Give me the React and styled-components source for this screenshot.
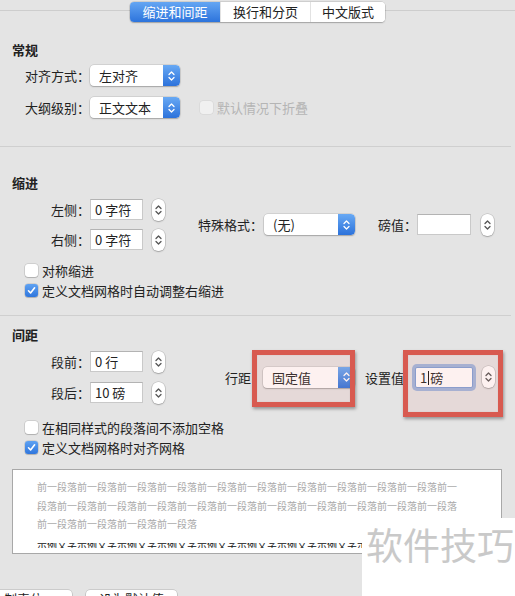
import React from "react";
import styled, { createGlobalStyle } from "styled-components";

const GlobalStyle = createGlobalStyle`
  html, body { margin: 0; padding: 0; background: #e4e4e4; }
  body { font-family: "Noto Sans CJK SC", "Noto Sans", sans-serif; color: #222; }
  * { box-sizing: border-box; }
`;

const Page = styled.div`
  position: relative;
  width: 515px;
  height: 596px;
  overflow: hidden;
  background: #e4e4e4;
  display: flex;
  flex-direction: column;
  & > * {
    flex-shrink: 0;
  }
`;

const TabBar = styled.div`
  position: relative;
  height: 24px;
  padding-top: 2px;
  display: flex;
  justify-content: center;
  &::before {
    content: "";
    position: absolute;
    left: 0;
    right: 0;
    top: 10px;
    height: 1px;
    background: #cdcdcd;
  }
`;

const TabGroup = styled.div`
  position: relative;
  display: flex;
  height: 20px;
  border-radius: 4px;
  background: #fff;
  overflow: hidden;
  box-shadow: 0 0 0 0.5px rgba(0, 0, 0, 0.18), 0 1px 1.5px rgba(0, 0, 0, 0.22);
`;

const Tab = styled.div`
  width: ${(p) => p.$w}px;
  font-size: 13px;
  line-height: 20px;
  text-align: center;
  color: ${(p) => (p.$active ? "#fff" : "#222")};
  background: ${(p) =>
    p.$active ? "linear-gradient(#64a6f3, #2d74dc)" : "#fff"};
  & + & {
    border-left: 1px solid #e2e2e2;
  }
`;

const Section = styled.div`
  display: flex;
  flex-direction: column;
  padding-left: 12px;
`;

const SectionTitle = styled.div`
  margin-top: ${(p) => p.$mt}px;
  font-size: 13px;
  font-weight: bold;
  line-height: 18px;
  color: #222;
`;

const Divider = styled.div`
  margin-top: ${(p) => p.$mt}px;
  margin-right: 4px;
  height: 1px;
  background: #cfcfcf;
`;

const FormRow = styled.div`
  display: flex;
  align-items: center;
  height: 21px;
  margin-top: ${(p) => p.$mt || 0}px;
`;

const FieldBlock = styled.div`
  display: flex;
  align-items: center;
  margin-top: ${(p) => p.$mt}px;
`;

const StackCol = styled.div`
  display: flex;
  flex-direction: column;
  gap: ${(p) => p.$gap}px;
`;

const Label = styled.div`
  width: ${(p) => p.$w}px;
  margin-left: ${(p) => p.$ml || 0}px;
  text-align: ${(p) => (p.$right ? "right" : "left")};
  font-size: 13px;
  line-height: 21px;
  white-space: nowrap;
  color: #222;
`;

const SelectBox = styled.div`
  display: flex;
  width: ${(p) => p.$w}px;
  height: 21px;
  background: #fff;
  border-radius: 4px;
  box-shadow: 0 0 0 0.5px rgba(0, 0, 0, 0.16), 0 1px 1.5px rgba(0, 0, 0, 0.22);
  overflow: hidden;
`;

const SelectText = styled.div`
  flex: 1;
  padding-left: 9px;
  font-size: 13px;
  line-height: 21px;
  color: #222;
  white-space: nowrap;
`;

const SelectArrow = styled.div`
  width: 17px;
  display: flex;
  align-items: center;
  justify-content: center;
  background: linear-gradient(#68a9f4, #2c72db);
  border-radius: 0 4px 4px 0;
`;

const TextInput = styled.div`
  width: ${(p) => p.$w}px;
  height: 21px;
  padding-left: 4px;
  background: #fff;
  border: 1px solid ${(p) => (p.$focus ? "#7c9fd6" : "#c9c9c9")};
  border-top-color: ${(p) => (p.$focus ? "#7c9fd6" : "#b3b3b3")};
  box-shadow: ${(p) =>
    p.$focus ? "0 0 0 3px rgba(110, 150, 215, 0.6)" : "none"};
  border-radius: ${(p) => (p.$focus ? 2 : 0)}px;
  font-size: 13px;
  line-height: 19px;
  color: #222;
  white-space: nowrap;
`;

const Caret = styled.span`
  display: inline-block;
  width: 1px;
  height: 14px;
  margin: 0 1px;
  vertical-align: -2px;
  background: #111;
`;

const StepperBox = styled.div`
  width: 13px;
  height: 22px;
  margin-left: ${(p) => p.$ml}px;
  border-radius: 6px;
  background: #fff;
  box-shadow: 0 0 0 0.5px rgba(0, 0, 0, 0.2), 0 1px 1.5px rgba(0, 0, 0, 0.2);
  display: flex;
  align-items: center;
  justify-content: center;
`;

const CheckRow = styled.div`
  display: flex;
  align-items: center;
  height: ${(p) => p.$h || 20}px;
  margin-top: ${(p) => p.$mt || 0}px;
  margin-left: ${(p) => p.$ml ?? 13}px;
  font-size: 13px;
  color: ${(p) => (p.$disabled ? "#b5b5b5" : "#222")};
  white-space: nowrap;
`;

const CheckBox = styled.div`
  width: 13px;
  height: 13px;
  margin-right: 4px;
  border-radius: 3px;
  display: flex;
  align-items: center;
  justify-content: center;
  background: ${(p) =>
    p.$checked ? "linear-gradient(#5fa2f2, #2f76dd)" : p.$disabled ? "#f0f0f0" : "#fff"};
  box-shadow: ${(p) =>
    p.$disabled
      ? "0 0 0 0.5px rgba(0,0,0,0.08)"
      : "0 0 0 0.5px rgba(0,0,0,0.18), 0 1px 1px rgba(0,0,0,0.15)"};
`;

const Preview = styled.div`
  margin: 12px 0 0 12px;
  width: 490px;
  height: 85px;
  background: #fff;
  border: 1px solid #a8a8a8;
  padding: 8px 0 0 24px;
  overflow: hidden;
`;

const PreviewLine = styled.div`
  font-size: 10px;
  line-height: 18.5px;
  color: #a9a9a9;
  white-space: nowrap;
`;

const SampleStrip = styled.div`
  margin-top: 9px;
  height: 5px;
  overflow: hidden;
`;

const SampleText = styled.div`
  margin-top: -3px;
  font-size: 10px;
  line-height: 10px;
  color: #111;
  white-space: nowrap;
`;

const ButtonBar = styled.div`
  display: flex;
  margin-top: 36px;
  margin-left: -14px;
  gap: 14px;
`;

const Button = styled.div`
  width: ${(p) => p.$w}px;
  height: 22px;
  background: #fff;
  border-radius: 4px;
  box-shadow: 0 0 0 0.5px rgba(0, 0, 0, 0.22), 0 1px 1px rgba(0, 0, 0, 0.2);
  font-size: 13px;
  line-height: 17px;
  text-align: center;
  color: #222;
`;

const Highlight = styled.div`
  position: absolute;
  left: ${(p) => p.$x}px;
  top: ${(p) => p.$y}px;
  width: ${(p) => p.$w}px;
  height: ${(p) => p.$h}px;
  border: 5px solid #d85a50;
  background: rgba(240, 150, 140, 0.13);
  box-shadow: 1px 2px 3px rgba(0, 0, 0, 0.35), inset 0 0 1px rgba(0, 0, 0, 0.2);
  pointer-events: none;
`;

const Watermark = styled.div`
  position: absolute;
  left: 362px;
  top: 518px;
  right: 0;
  bottom: 0;
  background: #fff;
  padding: 6px 0 0 4px;
  font-size: 37px;
  line-height: 40px;
  color: #c9c9c9;
  white-space: nowrap;
`;

const Chevrons = ({ color }) => (
  <svg width="7" height="12" viewBox="0 0 7 12">
    <path d="M1 4.5 L3.5 2 L6 4.5" fill="none" stroke={color} strokeWidth="1.3" strokeLinecap="round" strokeLinejoin="round" />
    <path d="M1 7.5 L3.5 10 L6 7.5" fill="none" stroke={color} strokeWidth="1.3" strokeLinecap="round" strokeLinejoin="round" />
  </svg>
);

const Select = ({ w, children }) => (
  <SelectBox $w={w}>
    <SelectText>{children}</SelectText>
    <SelectArrow>
      <Chevrons color="#fff" />
    </SelectArrow>
  </SelectBox>
);

const Stepper = ({ ml }) => (
  <StepperBox $ml={ml}>
    <Chevrons color="#555" />
  </StepperBox>
);

const Check = ({ checked, disabled, children, mt, ml }) => (
  <CheckRow $mt={mt} $ml={ml} $disabled={disabled}>
    <CheckBox $checked={checked} $disabled={disabled}>
      {checked && (
        <svg width="9" height="9" viewBox="0 0 9 9">
          <path d="M1.5 4.8 L3.6 7 L7.6 1.8" fill="none" stroke="#fff" strokeWidth="1.6" strokeLinecap="round" strokeLinejoin="round" />
        </svg>
      )}
    </CheckBox>
    {children}
  </CheckRow>
);

const rep = (s, n) => Array(n).fill(s).join("");

export default function App() {
  return (
    <>
      <GlobalStyle />
      <Page>
        <TabBar>
          <TabGroup>
            <Tab $w={90} $active>缩进和间距</Tab>
            <Tab $w={90}>换行和分页</Tab>
            <Tab $w={75}>中文版式</Tab>
          </TabGroup>
        </TabBar>

        <Section>
          <SectionTitle $mt={17}>常规</SectionTitle>
          <FormRow $mt={6}>
            <Label $w={78} $right>对齐方式：</Label>
            <Select w={90}>左对齐</Select>
          </FormRow>
          <FormRow $mt={11}>
            <Label $w={78} $right>大纲级别：</Label>
            <Select w={90}>正文文本</Select>
            <Check disabled ml={20}>默认情况下折叠</Check>
          </FormRow>
        </Section>

        <Divider $mt={28} />

        <Section>
          <SectionTitle $mt={27}>缩进</SectionTitle>
          <FieldBlock $mt={7}>
            <StackCol $gap={9}>
              <FormRow>
                <Label $w={78} $right>左侧：</Label>
                <TextInput $w={53}>0 字符</TextInput>
                <Stepper ml={9} />
              </FormRow>
              <FormRow>
                <Label $w={78} $right>右侧：</Label>
                <TextInput $w={53}>0 字符</TextInput>
                <Stepper ml={9} />
              </FormRow>
            </StackCol>
            <Label $w={66} $ml={33}>特殊格式：</Label>
            <Select w={91}>(无)</Select>
            <Label $w={39} $ml={23}>磅值：</Label>
            <TextInput $w={54} />
            <Stepper ml={10} />
          </FieldBlock>
          <Check mt={10}>对称缩进</Check>
          <Check checked>定义文档网格时自动调整右缩进</Check>
        </Section>

        <Divider $mt={15} />

        <Section>
          <SectionTitle $mt={10}>间距</SectionTitle>
          <FieldBlock $mt={7}>
            <StackCol $gap={10}>
              <FormRow>
                <Label $w={78} $right>段前：</Label>
                <TextInput $w={53}>0 行</TextInput>
                <Stepper ml={9} />
              </FormRow>
              <FormRow>
                <Label $w={78} $right>段后：</Label>
                <TextInput $w={53}>10 磅</TextInput>
                <Stepper ml={9} />
              </FormRow>
            </StackCol>
            <Label $w={38} $ml={60}>行距</Label>
            <Select w={92}>固定值</Select>
            <Label $w={50} $ml={10}>设置值</Label>
            <TextInput $w={58} $focus>
              1<Caret />磅
            </TextInput>
            <Stepper ml={9} />
          </FieldBlock>
          <Check mt={14}>在相同样式的段落间不添加空格</Check>
          <Check checked>定义文档网格时对齐网格</Check>
        </Section>

        <Preview>
          <PreviewLine>{rep("前一段落", 10)}前一</PreviewLine>
          <PreviewLine>段落{rep("前一段落", 10)}</PreviewLine>
          <PreviewLine>{rep("前一段落", 4)}</PreviewLine>
          <SampleStrip>
            <SampleText>{rep("示例文字", 20)}</SampleText>
          </SampleStrip>
        </Preview>

        <ButtonBar>
          <Button $w={86}>制表位...</Button>
          <Button $w={91}>设为默认值</Button>
        </ButtonBar>

        <Highlight $x={252} $y={350} $w={103} $h={57} />
        <Highlight $x={403} $y={350} $w={100} $h={67} />
        <Watermark>软件技巧</Watermark>
      </Page>
    </>
  );
}
